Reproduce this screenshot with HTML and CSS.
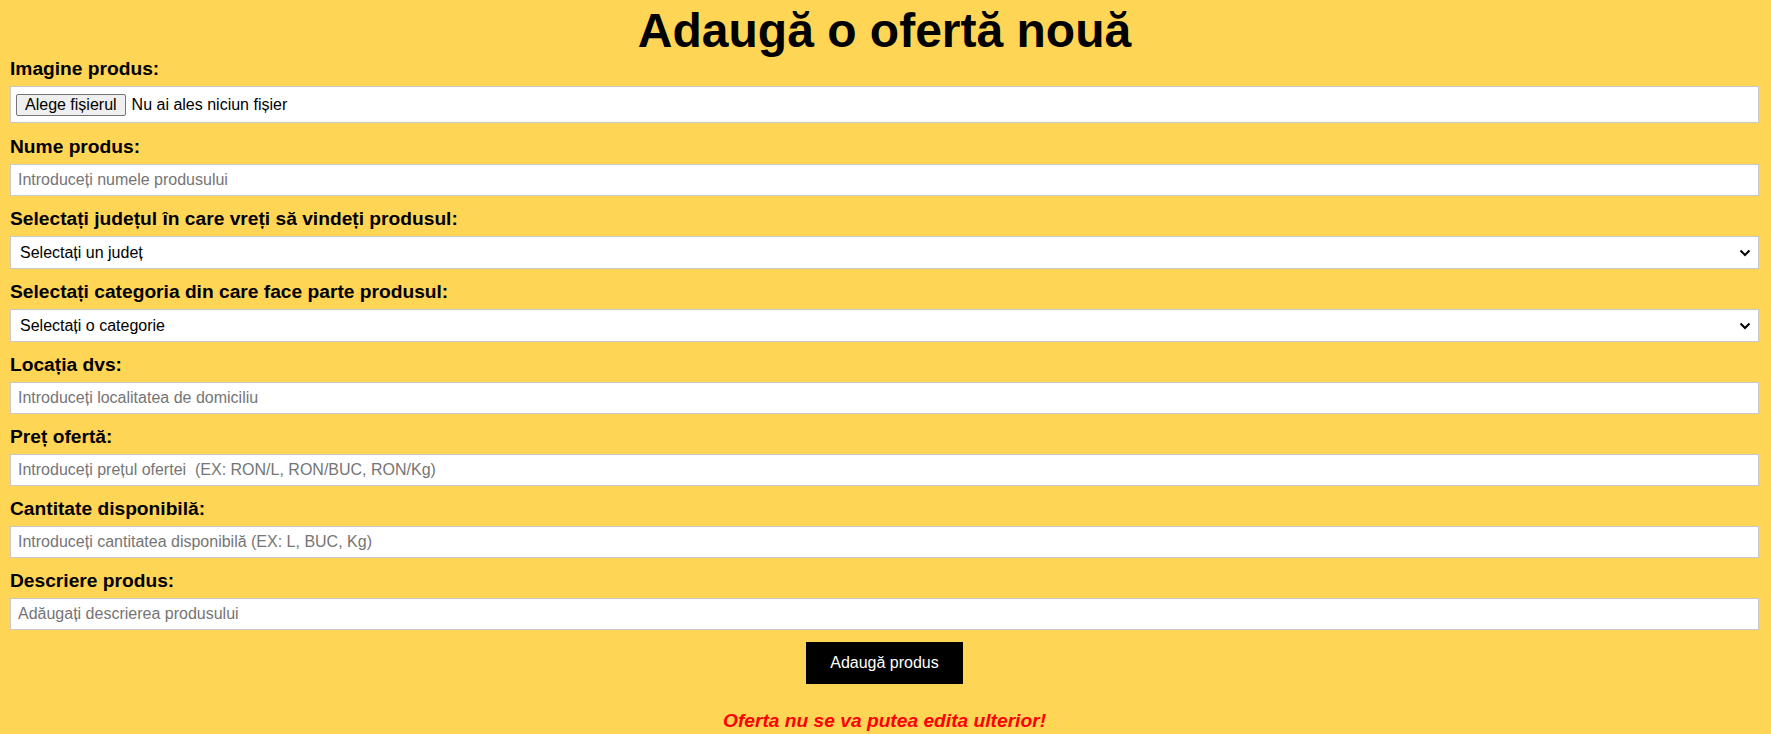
FILE: index.html
```html
<!DOCTYPE html>
<html lang="ro">
<head>
<meta charset="utf-8">
<title>Adaugă o ofertă nouă</title>
<link rel="stylesheet" href="styles.css">
</head>
<body>
<main class="page">
  <h1 class="title">Adaugă o ofertă nouă</h1>
  <form class="form">
    <label class="field-label" for="img">Imagine produs:</label>
    <label class="file-box" for="img">
      <span class="file-btn">Alege fișierul</span>
      <span class="file-name">Nu ai ales niciun fișier</span>
      <input class="file-hidden" type="file" id="img">
    </label>

    <label class="field-label" for="nume">Nume produs:</label>
    <input class="text-input" id="nume" type="text" placeholder="Introduceți numele produsului">

    <label class="field-label" for="judet">Selectați județul în care vreți să vindeți produsul:</label>
    <div class="select-wrap">
      <select class="select-input" id="judet">
        <option>Selectați un județ</option>
      </select>
      <svg class="chev" width="12" height="8" viewBox="0 0 12 8"><path d="M1.5 1.5 L6 6 L10.5 1.5" fill="none" stroke="#000" stroke-width="2"/></svg>
    </div>

    <label class="field-label" for="cat">Selectați categoria din care face parte produsul:</label>
    <div class="select-wrap">
      <select class="select-input" id="cat">
        <option>Selectați o categorie</option>
      </select>
      <svg class="chev" width="12" height="8" viewBox="0 0 12 8"><path d="M1.5 1.5 L6 6 L10.5 1.5" fill="none" stroke="#000" stroke-width="2"/></svg>
    </div>

    <label class="field-label" for="loc">Locația dvs:</label>
    <input class="text-input" id="loc" type="text" placeholder="Introduceți localitatea de domiciliu">

    <label class="field-label" for="pret">Preț ofertă:</label>
    <input class="text-input" id="pret" type="text" placeholder="Introduceți prețul ofertei  (EX: RON/L, RON/BUC, RON/Kg)">

    <label class="field-label" for="cant">Cantitate disponibilă:</label>
    <input class="text-input" id="cant" type="text" placeholder="Introduceți cantitatea disponibilă (EX: L, BUC, Kg)">

    <label class="field-label" for="desc">Descriere produs:</label>
    <input class="text-input" id="desc" type="text" placeholder="Adăugați descrierea produsului">

    <div class="actions">
      <button class="submit" type="button">Adaugă produs</button>
    </div>
    <p class="warning">Oferta nu se va putea edita ulterior!</p>
  </form>
</main>
</body>
</html>
```
FILE: styles.css
```css
html, body {
  margin: 0;
  padding: 0;
  background: #ffd556;
}
body {
  font-family: "Liberation Sans", Arial, sans-serif;
  color: #000;
}
.page {
  padding: 3px 12px 0 10px;
}
.title {
  margin: 0;
  font-size: 48px;
  font-weight: bold;
  text-align: center;
  line-height: 55px;
}
.form {
  display: flex;
  flex-direction: column;
}
.field-label {
  display: block;
  font-size: 19.2px;
  font-weight: bold;
  line-height: 22px;
  margin-bottom: 6px;
}
.file-box {
  display: flex;
  align-items: center;
  gap: 6px;
  height: 37px;
  box-sizing: border-box;
  background: #fff;
  border: 1px solid #c8c8c8;
  padding: 0 5px;
  margin-bottom: 13px;
  font-size: 16px;
  cursor: pointer;
}
.file-btn {
  display: inline-block;
  background: #efefef;
  border: 1px solid #767676;
  border-radius: 2px;
  padding: 1px 8px;
  line-height: 18px;
  color: #000;
}
.file-name {
  color: #000;
}
.file-hidden {
  display: none;
}
.text-input {
  display: block;
  box-sizing: border-box;
  width: 100%;
  height: 32px;
  margin: 0 0 12px 0;
  padding: 0 7px;
  border: 1px solid #c8c8c8;
  background: #fff;
  font-family: "Liberation Sans", Arial, sans-serif;
  font-size: 16px;
  color: #000;
  outline: none;
}
.text-input::placeholder {
  color: #757575;
}
.select-wrap {
  position: relative;
  margin-bottom: 12px;
}
.select-input {
  display: block;
  box-sizing: border-box;
  width: 100%;
  height: 33px;
  margin: 0;
  padding: 0 9px;
  border: 1px solid #c8c8c8;
  border-radius: 0;
  background: #fff;
  font-family: "Liberation Sans", Arial, sans-serif;
  font-size: 16px;
  color: #000;
  appearance: none;
  -webkit-appearance: none;
  outline: none;
}
.chev {
  position: absolute;
  right: 8px;
  top: 13px;
  pointer-events: none;
}
.actions {
  display: flex;
  justify-content: center;
}
.submit {
  background: #000;
  color: #fff;
  border: none;
  font-family: "Liberation Sans", Arial, sans-serif;
  font-size: 16px;
  line-height: 18px;
  padding: 12px 24px;
  cursor: pointer;
}
.warning {
  margin: 26px 0 0 0;
  text-align: center;
  color: #ff0000;
  font-size: 19.2px;
  line-height: 22px;
  font-weight: bold;
  font-style: italic;
}
```
